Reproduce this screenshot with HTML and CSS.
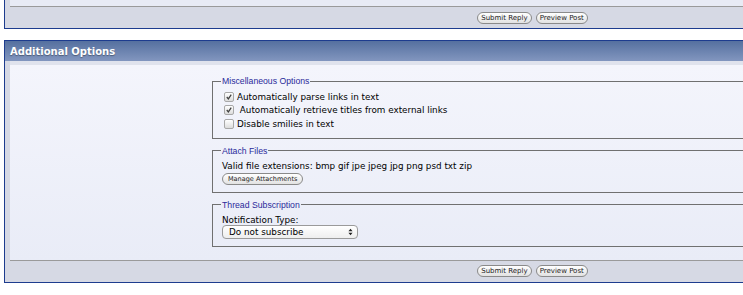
FILE: index.html
```html
<!DOCTYPE html>
<html lang="en">
<head>
    <meta charset="UTF-8">
    <title>Reply to Thread</title>
    <link rel="stylesheet" href="styles.css">
</head>
<body>
    <div class="panel panel-top">
        <div class="panel-body short"></div>
        <div class="panel-foot">
            <button class="btn">Submit Reply</button>
            <button class="btn">Preview Post</button>
        </div>
    </div>

    <div class="panel">
        <div class="panel-head">Additional Options</div>
        <div class="panel-body">
            <div class="options">
                <div class="label-col"></div>
                <div class="field-col">
                    <fieldset class="misc">
                        <legend>Miscellaneous Options</legend>
                        <label class="check"><span class="cb on"><svg viewBox="0 0 9 9"><path d="M2 4.5 L3.8 6.6 L7 1.8" /></svg></span>Automatically parse links in text</label>
                        <label class="check"><span class="cb on"><svg viewBox="0 0 9 9"><path d="M2 4.5 L3.8 6.6 L7 1.8" /></svg></span>&nbsp;Automatically retrieve titles from external links</label>
                        <label class="check"><span class="cb"></span>Disable smilies in text</label>
                    </fieldset>

                    <fieldset class="attach">
                        <legend>Attach Files</legend>
                        <div class="line">Valid file extensions: bmp gif jpe jpeg jpg png psd txt zip</div>
                        <button class="btn small">Manage Attachments</button>
                    </fieldset>

                    <fieldset class="subscribe">
                        <legend>Thread Subscription</legend>
                        <div class="line">Notification Type:</div>
                        <div class="select-wrap">
                            <select class="select">
                                <option>Do not subscribe</option>
                            </select>
                            <svg class="arrows" viewBox="0 0 6 9"><path d="M3 0.5 L5.5 3.5 L0.5 3.5 Z M3 8.5 L5.5 5.5 L0.5 5.5 Z" /></svg>
                        </div>
                    </fieldset>
                </div>
            </div>
        </div>
        <div class="panel-foot">
            <button class="btn">Submit Reply</button>
            <button class="btn">Preview Post</button>
        </div>
    </div>
</body>
</html>
```

FILE: styles.css
```css
body {
    margin: 0;
    background: #ffffff;
    font-family: 'DejaVu Sans', Verdana, sans-serif;
    font-size: 8.8px;
    color: #000000;
    overflow: hidden;
}

.panel {
    width: 1050px;
    margin-left: 4px;
    border: 1px solid #1d3c8e;
    background: #d6d9e4;
    margin-bottom: 11px;
}

.panel-top {
    border-top: none;
}

.panel-head {
    height: 20px;
    line-height: 22px;
    padding-left: 5px;
    background: linear-gradient(to bottom, #55709f, #8296bf);
    color: #ffffff;
    font-family: 'DejaVu Sans', Verdana, sans-serif;
    font-weight: bold;
    font-size: 10px;
    text-shadow: 0 1px 1px rgba(0, 0, 0, 0.35);
}

.panel-body {
    margin: 0 0 0 5px;
    padding-top: 4px;
    background: #e0e3ed;
    border-bottom: 1px solid #9a9a9a;
}

.panel-body.short {
    padding-top: 0;
    height: 6px;
    background: #e8ebf5;
}

.options {
    display: grid;
    grid-template-columns: 202px 1fr;
    background: linear-gradient(to bottom, #f4f5fc, #e9ecf7);
    padding-top: 11px;
    padding-bottom: 13px;
}

.field-col {
    display: flex;
    flex-direction: column;
    gap: 7px;
}

fieldset {
    margin: 0;
    width: 560px;
    border: 1px solid #707070;
    padding: 4px 9px 8px 9px;
}

legend {
    color: #2a2a9a;
    padding: 0 1px;
    font-family: 'Liberation Sans', Arial, sans-serif;
    font-size: 8.7px;
    margin-left: -1px;
}

.misc {
    padding-bottom: 7px;
}

.check {
    display: flex;
    align-items: center;
    height: 13.5px;
}

.cb {
    width: 8px;
    height: 8px;
    border: 1px solid #a8a8a8;
    border-radius: 2px;
    background: linear-gradient(to bottom, #ffffff, #dcdcdc);
    margin: 0 3px 0 2px;
    display: flex;
}

.cb svg {
    width: 8px;
    height: 8px;
    fill: none;
    stroke: #404040;
    stroke-width: 1.4;
}

.line {
    height: 13px;
    line-height: 13px;
}

.attach {
    padding-bottom: 7px;
}

.subscribe .line {
    height: 11px;
    line-height: 12px;
}

.subscribe {
    padding-bottom: 7px;
}

.btn {
    font-family: 'DejaVu Sans', Verdana, sans-serif;
    font-size: 7px;
    height: 12px;
    padding: 0 3px;
    border: 1px solid #8a8a8a;
    border-radius: 6px;
    background: linear-gradient(to bottom, #ffffff, #e2e2e2);
    color: #222222;
    line-height: 10px;
}

.btn.small {
    font-size: 6.5px;
    padding: 0 5px;
}

.select-wrap {
    position: relative;
    width: 136px;
}

.select {
    appearance: none;
    display: block;
    width: 136px;
    height: 14px;
    border: 1px solid #9a9a9a;
    border-radius: 4px;
    background: linear-gradient(to bottom, #ffffff, #eeeeee);
    font-family: 'DejaVu Sans', Verdana, sans-serif;
    font-size: 8.8px;
    padding: 0 0 0 6px;
    color: #000000;
}

.arrows {
    position: absolute;
    right: 5px;
    top: 3px;
    width: 5px;
    height: 8px;
    fill: #222222;
}

.panel-foot {
    height: 21px;
    display: flex;
    justify-content: center;
    align-items: center;
    gap: 4px;
    padding-left: 5px;
}
```
